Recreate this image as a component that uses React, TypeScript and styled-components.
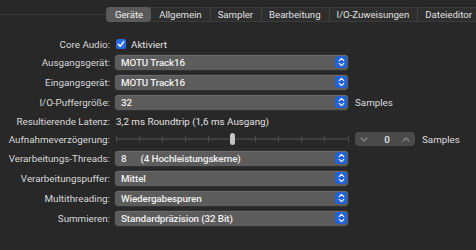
import styled, { createGlobalStyle } from "styled-components"

const Global = createGlobalStyle`
  html, body {
    margin: 0;
    padding: 0;
    background: #282828;
  }
  body {
    font-family: Roboto, "Noto Sans", sans-serif;
    font-size: 9.8px;
    color: #dedede;
    width: 476px;
    height: 250px;
    overflow: hidden;
  }
`

const tabs = ["Geräte", "Allgemein", "Sampler", "Bearbeitung", "I/O-Zuweisungen", "Dateieditor"]

const Chevrons = () => (
  <svg width="7" height="10" viewBox="0 0 7 10">
    <path d="M1.2 3.6 L3.5 1.4 L5.8 3.6 M1.2 6.4 L3.5 8.6 L5.8 6.4" fill="none" stroke="#fff" strokeWidth="1.2" strokeLinecap="round" strokeLinejoin="round" />
  </svg>
)

const Popup = ({ children }: { children: React.ReactNode }) => (
  <PopupBox>
    <PopupText>{children}</PopupText>
    <BlueKnob>
      <Chevrons />
    </BlueKnob>
  </PopupBox>
)

const ticks = Array.from({ length: 11 }, (_, i) => i)

const App = () => {
  return (
    <>
      <Global />
      <Page>
        <TabBar>
          <TabLine />
          <Segment>
            {tabs.map((t, i) => (
              <Tab key={t} active={i === 0} last={i === tabs.length - 1}>
                {t}
              </Tab>
            ))}
          </Segment>
        </TabBar>

        <Form>
          <Row h={16}>
            <Label>Core Audio:</Label>
            <Field>
              <Check>
                <svg width="8" height="8" viewBox="0 0 8 8">
                  <path d="M1.3 4.2 L3.2 6.2 L6.8 1.6" fill="none" stroke="#fff" strokeWidth="1.4" strokeLinecap="round" strokeLinejoin="round" />
                </svg>
              </Check>
              <Plain>Aktiviert</Plain>
            </Field>
          </Row>
          <Row h={20}>
            <Label>Ausgangsgerät:</Label>
            <Field>
              <Popup>MOTU Track16</Popup>
            </Field>
          </Row>
          <Row h={20}>
            <Label>Eingangsgerät:</Label>
            <Field>
              <Popup>MOTU Track16</Popup>
            </Field>
          </Row>
          <Row h={20}>
            <Label>I/O-Puffergröße:</Label>
            <Field>
              <Popup>32</Popup>
              <Unit>Samples</Unit>
            </Field>
          </Row>
          <Row h={18}>
            <Label>Resultierende Latenz:</Label>
            <Field>
              <Plain>3,2 ms Roundtrip (1,6 ms Ausgang)</Plain>
            </Field>
          </Row>
          <Row h={18}>
            <Label>Aufnahmeverzögerung:</Label>
            <Field>
              <Slider>
                <Track />
                {ticks.map((i) => (
                  <Tick key={i} style={{ left: `${(i / 10) * 100}%` }} />
                ))}
                <Thumb style={{ left: "50%" }} />
              </Slider>
              <Stepper>
                <svg width="8" height="5" viewBox="0 0 8 5">
                  <path d="M1 1 L4 4 L7 1" fill="none" stroke="#8a8a8a" strokeWidth="1.1" strokeLinecap="round" strokeLinejoin="round" />
                </svg>
                <StepValue>0</StepValue>
                <svg width="8" height="5" viewBox="0 0 8 5">
                  <path d="M1 4 L4 1 L7 4" fill="none" stroke="#8a8a8a" strokeWidth="1.1" strokeLinecap="round" strokeLinejoin="round" />
                </svg>
              </Stepper>
              <Unit>Samples</Unit>
            </Field>
          </Row>
          <Row h={20}>
            <Label>Verarbeitungs-Threads:</Label>
            <Field>
              <Popup>
                8<Gap />(4 Hochleistungskerne)
              </Popup>
            </Field>
          </Row>
          <Row h={20}>
            <Label>Verarbeitungspuffer:</Label>
            <Field>
              <Popup>Mittel</Popup>
            </Field>
          </Row>
          <Row h={20}>
            <Label>Multithreading:</Label>
            <Field>
              <Popup>Wiedergabespuren</Popup>
            </Field>
          </Row>
          <Row h={20}>
            <Label>Summieren:</Label>
            <Field>
              <Popup>Standardpräzision (32 Bit)</Popup>
            </Field>
          </Row>
        </Form>
      </Page>
    </>
  )
}

export default App

const Page = styled.div`
  width: 476px;
  height: 250px;
  display: flex;
  flex-direction: column;
  overflow: hidden;
`

const TabBar = styled.div`
  height: 36px;
  display: flex;
  align-items: flex-start;
  padding-top: 7px;
  box-sizing: border-box;
`

const TabLine = styled.div`
  width: 106px;
  height: 1px;
  margin-top: 7px;
  background: #3a3a3a;
  flex-shrink: 0;
`

const Segment = styled.div`
  display: flex;
  height: 15px;
  background: #2e2e2e;
  border: 1px solid #3b3b3b;
  border-radius: 4px;
  box-sizing: border-box;
  flex-shrink: 0;
  align-items: center;
`

const Tab = styled.div<{ active: boolean; last: boolean }>`
  height: 15px;
  margin-top: -1px;
  margin-bottom: -1px;
  padding: 0 8px;
  display: flex;
  align-items: center;
  white-space: nowrap;
  font-size: 9.6px;
  border-radius: 4px;
  background: ${({ active }) => (active ? "#5a5a5a" : "transparent")};
  color: ${({ active }) => (active ? "#f0f0f0" : "#e0e0e0")};
  box-shadow: ${({ last, active }) => (last || active ? "none" : "1px 0 0 #444")};
  margin-left: ${({ active }) => (active ? "-1px" : "0")};
  padding-left: ${({ active }) => (active ? "9px" : "8px")};
`

const Form = styled.div`
  display: flex;
  flex-direction: column;
`

const Row = styled.div<{ h: number }>`
  height: ${({ h }) => h}px;
  display: flex;
  align-items: center;
`

const Label = styled.div`
  width: 110px;
  flex-shrink: 0;
  text-align: right;
  white-space: nowrap;
  color: #d8d8d8;
`

const Field = styled.div`
  display: flex;
  align-items: center;
  padding-left: 5px;
`

const Plain = styled.span`
  color: #e2e2e2;
  white-space: nowrap;
  margin-left: 1px;
`

const Check = styled.div`
  width: 10px;
  height: 10px;
  border-radius: 2.5px;
  background: #2a6be4;
  display: flex;
  align-items: center;
  justify-content: center;
  margin: 0 4px 0 1px;
`

const PopupBox = styled.div`
  width: 233px;
  height: 15px;
  box-sizing: border-box;
  background: #5c5c5c;
  border-radius: 3.5px;
  box-shadow: inset 0 1px 0 #6a6a6a, 0 0 0 0.5px #3c3c3c;
  display: flex;
  align-items: center;
  justify-content: space-between;
  padding: 0 1px 0 6px;
`

const PopupText = styled.span`
  color: #f0f0f0;
  font-weight: 500;
  letter-spacing: -0.1px;
  white-space: nowrap;
`

const Gap = styled.span`
  display: inline-block;
  width: 14px;
`

const BlueKnob = styled.div`
  width: 12px;
  height: 12px;
  border-radius: 3px;
  background: #2462d8;
  display: flex;
  align-items: center;
  justify-content: center;
`

const Unit = styled.span`
  margin-left: 7px;
  color: #dcdcdc;
`

const Slider = styled.div`
  position: relative;
  width: 232px;
  height: 14px;
  margin-left: 1px;
`

const Track = styled.div`
  position: absolute;
  left: 0;
  right: 0;
  top: 6px;
  height: 2px;
  border-radius: 1px;
  background: #3f3f3f;
`

const Tick = styled.div`
  position: absolute;
  top: 4px;
  width: 1px;
  height: 6px;
  margin-left: -0.5px;
  background: #4a4a4a;
`

const Thumb = styled.div`
  position: absolute;
  top: 1px;
  width: 5px;
  height: 12px;
  margin-left: -2.5px;
  border-radius: 2.5px;
  background: #c4c4c4;
`

const Stepper = styled.div`
  width: 60px;
  height: 14px;
  margin-left: 7px;
  box-sizing: border-box;
  background: #4a4a4a;
  border-radius: 4px;
  display: flex;
  align-items: center;
  justify-content: space-between;
  padding: 0 5px;
`

const StepValue = styled.span`
  color: #e6e6e6;
  font-weight: 500;
  margin-left: 4px;
`
